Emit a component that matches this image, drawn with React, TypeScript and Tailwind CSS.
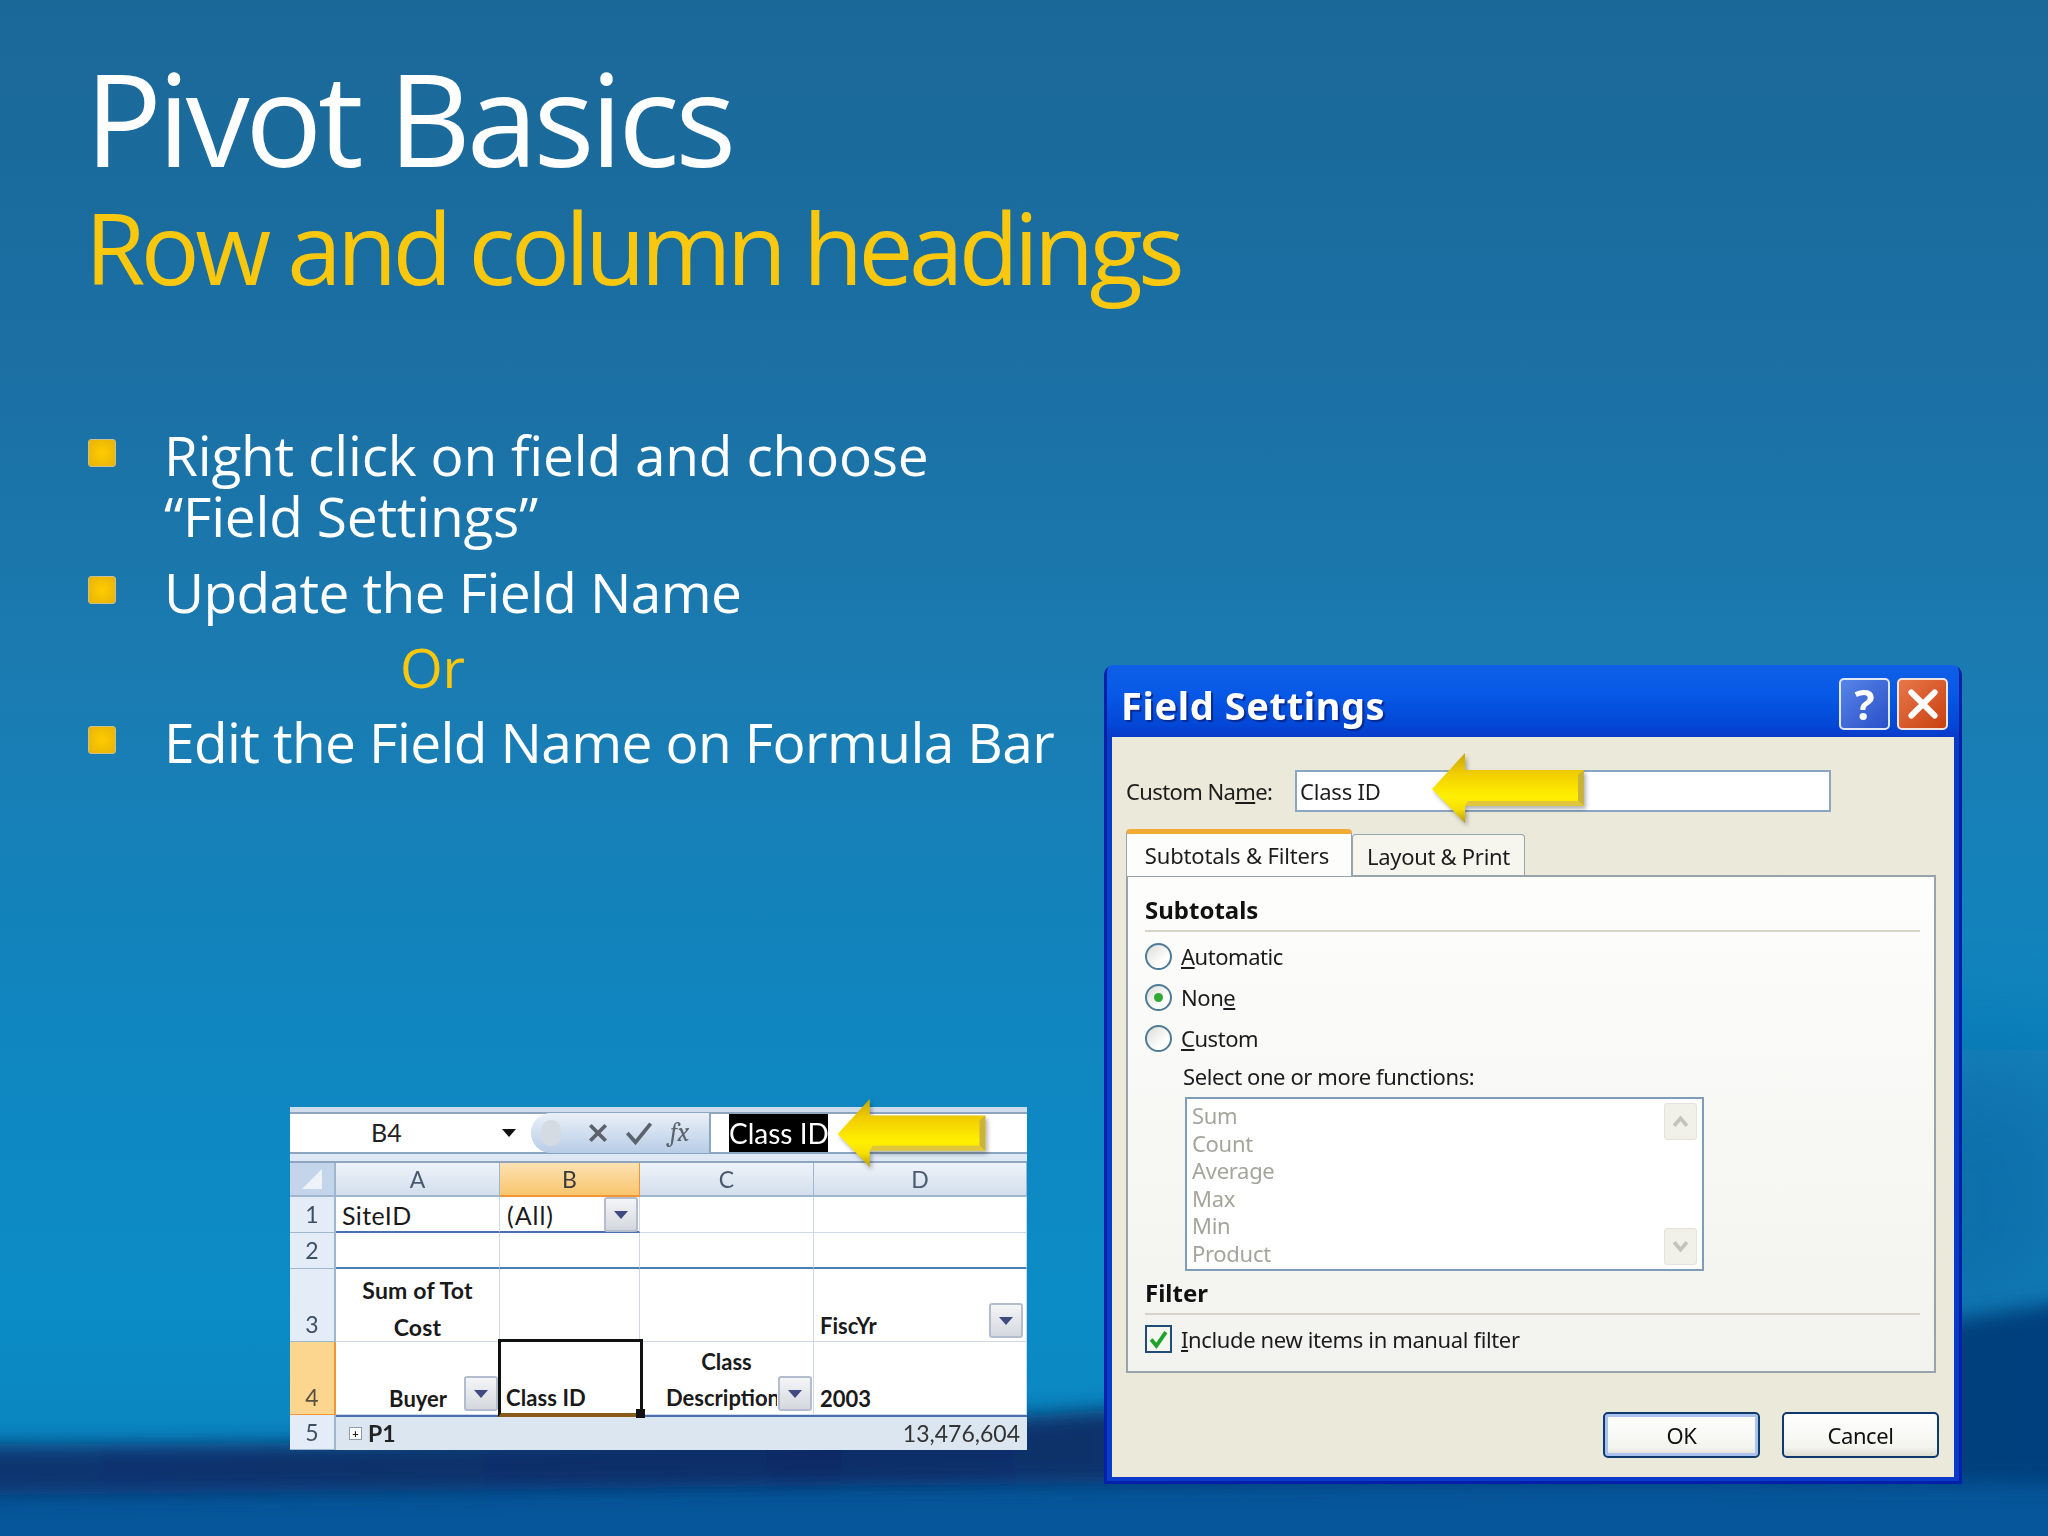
import React from 'react';

const dialogFont = { fontFamily: '"Noto Sans", "DejaVu Sans", sans-serif' };
const sheetFont = { fontFamily: 'Lato, "Liberation Sans", sans-serif' };

function YellowArrow({ id, className }: { id: string; className: string }) {
  return (
    <svg viewBox="0 0 152 70" className={className}>
      <defs>
        <linearGradient id={id} x1="0" y1="0" x2="0" y2="1">
          <stop offset="0" stopColor="#c9a400" />
          <stop offset="0.3" stopColor="#f2cf00" />
          <stop offset="0.62" stopColor="#fff000" />
          <stop offset="0.8" stopColor="#f7e000" />
          <stop offset="1" stopColor="#b99a08" />
        </linearGradient>
      </defs>
      <polygon points="0,36 33,0 33,17 152,17 152,53 33,53 33,70" fill={`url(#${id})`} />
      <polygon points="146,22 152,17 152,53 146,48" fill="#c9b33a" />
      <polygon points="33,53 152,53 146,48 36,48" fill="#e0c63a" />
    </svg>
  );
}

function Radio({ checked }: { checked?: boolean }) {
  return (
    <span className="flex h-[27px] w-[27px] items-center justify-center rounded-full border-2 border-[#4d7b98] bg-[linear-gradient(135deg,#dcdcd6,#ffffff_70%)]">
      {checked && <span className="h-[9px] w-[9px] rounded-full bg-[#2fa836]" />}
    </span>
  );
}

function RadioRow({ checked, children }: { checked?: boolean; children: React.ReactNode }) {
  return (
    <div className="flex h-[41px] items-center gap-[9px]">
      <Radio checked={checked} />
      <span className="text-[22px] tracking-[-0.45px] text-[#1c1c1c]">{children}</span>
    </div>
  );
}

function ScrollBtn({ up }: { up?: boolean }) {
  return (
    <div className="flex h-[37px] w-[33px] items-center justify-center rounded-[3px] border border-[#e4e4dc] bg-[#f1f1ea]">
      <svg viewBox="0 0 16 12" className="h-[13px] w-[17px]">
        <path d={up ? 'M2 10 L8 3 L14 10' : 'M2 2 L8 9 L14 2'} fill="none" stroke="#c4c4bc" strokeWidth="3.4" />
      </svg>
    </div>
  );
}

function XpButton({ label, primary }: { label: string; primary?: boolean }) {
  return (
    <div
      className={`flex h-[46px] w-[157px] items-center justify-center rounded-[5px] border-2 border-[#0f3a6e] bg-[linear-gradient(180deg,#ffffff,#f4f4ee_80%,#dcdcd0)] text-[22px] tracking-[-0.45px] text-[#111] ${
        primary ? 'shadow-[inset_0_0_0_3px_#a9c3ee]' : ''
      }`}
    >
      {label}
    </div>
  );
}

function FieldSettings() {
  return (
    <div
      style={dialogFont}
      className="flex h-[819px] w-[858px] flex-col rounded-t-[10px] px-[8px] pb-[7px] blur-[0.5px] shadow-[inset_-3px_-3px_0_#0420a8,inset_3px_-3px_0_#0420a8] bg-[linear-gradient(180deg,#0f5fe6_0,#0758e6_30px,#0347d6_60px,#0a3ac8_72px,#0a3ac8_100%)]"
    >
      <div className="flex h-[72px] shrink-0 items-center">
        <span className="ml-[9px] mt-[9px] text-[38px] font-bold tracking-[0.6px] text-white [text-shadow:2px_2px_1px_#0a2a90]">
          Field Settings
        </span>
        <div className="ml-auto mr-[6px] mt-[6px] flex gap-[7px]">
          <div className="flex h-[52px] w-[51px] items-center justify-center rounded-[5px] border-2 border-[#dfe8fb] bg-[linear-gradient(135deg,#5685e6,#2b50c9)] text-[42px] font-bold leading-none text-white">
            ?
          </div>
          <div className="flex h-[52px] w-[51px] items-center justify-center rounded-[5px] border-2 border-[#f0e5de] bg-[linear-gradient(135deg,#e9774a,#c8400f)]">
            <svg viewBox="0 0 32 32" className="h-[34px] w-[34px]">
              <path d="M5 5 L27 27 M27 5 L5 27" stroke="#fff" strokeWidth="5.5" strokeLinecap="round" />
            </svg>
          </div>
        </div>
      </div>

      <div className="flex flex-1 flex-col bg-[#ebe9d9] pl-[14px]">
        <div className="mt-[33px] flex h-[42px] items-center">
          <span className="w-[169px] text-[22px] tracking-[-0.6px] text-[#1c1c1c]">
            Custom Na<u className="underline-offset-2">m</u>e:
          </span>
          <div className="relative flex h-[42px] w-[536px] items-center border-2 border-[#8ba6c0] bg-white pl-[3px] text-[22px] tracking-[-0.2px] text-[#1c1c1c]">
            Class ID
            <YellowArrow
              id="dlgArrow"
              className="absolute left-[135px] top-[-19px] h-[70px] w-[152px] drop-shadow-[2px_3px_2px_rgba(0,0,0,0.3)]"
            />
          </div>
        </div>

        <div className="mt-[17px] flex h-[46px] items-end">
          <div className="z-10 -mb-[1px] flex h-[47px] w-[226px] items-center justify-center rounded-t-[4px] border-x border-[#98a4ab] border-t-[5px] border-t-[#f2ac35] bg-[#fdfdfb] pr-[4px] text-[22px] tracking-[-0.15px] text-[#1c1c1c]">
            Subtotals &amp; Filters
          </div>
          <div className="flex h-[41px] w-[173px] items-center justify-center rounded-t-[4px] border border-b-0 border-[#98a4ab] bg-[#f6f5ee] pt-[3px] text-[22px] tracking-[-0.3px] text-[#1c1c1c]">
            Layout &amp; Print
          </div>
        </div>

        <div className="flex h-[498px] w-[810px] flex-col border-2 border-[#98a4ab] bg-[linear-gradient(180deg,#fdfdfb,#f2f2ee)] pl-[17px] pr-[14px]">
          <div className="flex h-[53px] shrink-0 items-end pb-[2px] text-[24px] font-bold text-[#111]">Subtotals</div>
          <div className="h-[2px] shrink-0 bg-[#d6d4c6]" />
          <div className="mt-[4px]">
            <RadioRow>
              <u className="underline-offset-2">A</u>utomatic
            </RadioRow>
            <RadioRow checked>
              Non<u className="underline-offset-2">e</u>
            </RadioRow>
            <RadioRow>
              <u className="underline-offset-2">C</u>ustom
            </RadioRow>
          </div>
          <div className="ml-[38px] mt-[4px] flex h-[26px] items-center text-[22px] tracking-[-0.4px] text-[#1c1c1c]">
            Select one or more functions:
          </div>
          <div className="ml-[40px] mt-[8px] flex h-[174px] w-[519px] border-2 border-[#7f9db9] bg-white pl-[5px]">
            <div className="flex-1 pt-[3px] text-[22px] leading-[27.5px] tracking-[-0.3px] text-[#a5a59c]">
              <div>Sum</div>
              <div>Count</div>
              <div>Average</div>
              <div>Max</div>
              <div>Min</div>
              <div>Product</div>
            </div>
            <div className="mr-[5px] flex flex-col justify-between py-[4px]">
              <ScrollBtn up />
              <ScrollBtn />
            </div>
          </div>
          <div className="mt-[7px] flex h-[30px] items-center text-[24px] font-bold text-[#111]">Filter</div>
          <div className="mt-[5px] h-[2px] bg-[#d6d4c6]" />
          <div className="mt-[10px] flex h-[28px] items-center gap-[9px]">
            <span className="flex h-[28px] w-[27px] items-center justify-center border-2 border-[#1f4d78] bg-[#f6f6f0]">
              <svg viewBox="0 0 20 20" className="h-[21px] w-[21px]">
                <path d="M3 10 L8 16 L17 3" fill="none" stroke="#1fa32b" strokeWidth="3.6" />
              </svg>
            </span>
            <span className="text-[22px] tracking-[-0.37px] text-[#1c1c1c]">
              <u className="underline-offset-2">I</u>nclude new items in manual filter
            </span>
          </div>
        </div>

        <div className="mt-[39px] flex justify-end gap-[22px] pr-[15px]">
          <XpButton label="OK" primary />
          <XpButton label="Cancel" />
        </div>
      </div>
    </div>
  );
}

function FilterBtn({ className }: { className: string }) {
  return (
    <span
      className={`absolute flex h-[35px] w-[34px] items-center justify-center rounded-[3px] border-2 border-[#b4bdcd] bg-[linear-gradient(180deg,#f4f5f7,#d4d8de)] ${className}`}
    >
      <span className="h-0 w-0 border-x-[7px] border-t-[8px] border-x-transparent border-t-[#3f4a80]" />
    </span>
  );
}

const ColHead = ({ label, active }: { label: string; active?: boolean }) => (
  <div
    className={`flex items-center justify-center border-r border-b-2 text-[23px] ${
      active
        ? 'border-[#f29536] bg-[linear-gradient(180deg,#fce2b2,#f9c56e)] text-[#3b3b3b]'
        : 'border-[#9eb6ce] bg-[linear-gradient(180deg,#eef3f9,#d3dfed)] text-[#4a5a70]'
    }`}
  >
    {label}
  </div>
);

const RowNum = ({ n, active, tall }: { n: string; active?: boolean; tall?: boolean }) => (
  <div
    className={`flex justify-center border-r-2 border-b text-[23px] ${tall ? 'items-end' : 'items-center'} ${
      active ? 'border-[#f29536] bg-[#fcd58e] text-[#5a5040]' : 'border-[#9eb6ce] bg-[#e4ecf7] text-[#3f4f62]'
    }`}
  >
    {n}
  </div>
);

const cell = 'relative border-r border-b border-[#d0d7e5] bg-white text-[23px] text-[#1a1a1a]';

function PivotSheet() {
  return (
    <div style={sheetFont} className="w-[737px] bg-white blur-[0.5px]">
      <div className="h-[5px] bg-[#cfdcec]" />
      <div className="flex h-[42px] items-center border-y-2 border-[#8ea5bf] bg-white">
        <span className="ml-[81px] w-[131px] text-[25px] text-[#222]">B4</span>
        <span className="h-0 w-0 border-x-[7px] border-t-[8px] border-x-transparent border-t-[#111]" />
        <div className="ml-[15px] flex h-[40px] w-[180px] items-center rounded-l-[22px] border-r-2 border-[#8ea5bf] bg-[linear-gradient(180deg,#eaf0f8,#b8cde6)] pl-[10px]">
          <span className="h-[26px] w-[20px] rounded-full bg-[#d5dbe2]" />
          <svg viewBox="0 0 20 20" className="ml-[26px] h-[22px] w-[22px]">
            <path d="M3 3 L17 17 M17 3 L3 17" stroke="#5a626c" strokeWidth="3.4" />
          </svg>
          <svg viewBox="0 0 24 20" className="ml-[16px] h-[24px] w-[28px]">
            <path d="M2 10 L9 18 L22 2" fill="none" stroke="#5a626c" strokeWidth="3.2" />
          </svg>
          <span className="ml-[17px] font-serif text-[26px] italic text-[#5a626c]">fx</span>
        </div>
        <div className="relative ml-[18px] flex h-[38px] w-[99px] items-center bg-black text-[28px] text-white">
          <span className="whitespace-nowrap">Class ID</span>
          <YellowArrow
            id="barArrow"
            className="absolute left-[107px] top-[-15px] h-[68px] w-[151px] drop-shadow-[2px_3px_2px_rgba(0,0,0,0.3)]"
          />
        </div>
      </div>
      <div className="h-[9px] border-b-2 border-[#8ea5bf] bg-[#dde8f4]" />

      <div className="grid grid-cols-[46px_164px_140px_174px_213px] grid-rows-[34px_36px_36px_73px_73px_35px]">
        <div className="flex items-center justify-center border-r-2 border-b-2 border-[#9eb6ce] bg-[#c4d5eb]">
          <span className="h-0 w-0 border-b-[20px] border-l-[20px] border-b-[#eef3f9] border-l-transparent" />
        </div>
        <ColHead label="A" />
        <ColHead label="B" active />
        <ColHead label="C" />
        <ColHead label="D" />

        <RowNum n="1" />
        <div className={`${cell} flex items-center !border-b-2 !border-b-[#4a6fae] pl-[6px] pt-[3px] !text-[25px] tracking-[0.4px]`}>SiteID</div>
        <div className={`${cell} flex items-center !border-b-2 !border-b-[#4a6fae] pl-[7px] pt-[3px] !text-[25px] tracking-[1px]`}>
          (All)
          <FilterBtn className="right-[1px] top-[0px]" />
        </div>
        <div className={cell} />
        <div className={cell} />

        <RowNum n="2" />
        <div className={`${cell} !border-b-2 !border-b-[#4a80b0]`} />
        <div className={`${cell} !border-b-2 !border-b-[#4a80b0]`} />
        <div className={`${cell} !border-b-2 !border-b-[#4a80b0]`} />
        <div className={`${cell} !border-b-2 !border-b-[#4a80b0]`} />

        <RowNum n="3" tall />
        <div className={`${cell} flex flex-col items-center pt-[3px] !text-[23px] font-bold leading-[37px] tracking-[0.2px]`}>
          <span>Sum of Tot</span>
          <span>Cost</span>
        </div>
        <div className={cell} />
        <div className={cell} />
        <div className={`${cell} flex items-end pl-[6px] !text-[22px] font-bold leading-[30px]`}>
          FiscYr
          <FilterBtn className="right-[3px] top-[34px]" />
        </div>

        <RowNum n="4" active tall />
        <div className={`${cell} flex items-end justify-end pr-[52px] !text-[22px] font-bold leading-[30px]`}>
          Buyer
          <FilterBtn className="right-[1px] top-[34px]" />
        </div>
        <div className="relative z-10 -mb-[2px] -ml-[2px] -mr-[3px] -mt-[3px] flex items-end border-[3px] border-b-[4px] border-[#111] border-b-[#8a5a1a] bg-white pl-[5px] text-[22px] font-bold leading-[30px] tracking-[0.1px] text-[#1a1a1a]">
          Class ID
          <span className="absolute -bottom-[5px] -right-[5px] h-[9px] w-[9px] bg-[#111]" />
        </div>
        <div className={`${cell} flex flex-col overflow-hidden pt-[2px] !text-[22px] font-bold leading-[36px]`}>
          <span className="text-center">Class</span>
          <span className="w-[137px] overflow-hidden whitespace-nowrap pl-[26px]">Description</span>
          <FilterBtn className="right-[1px] top-[34px]" />
        </div>
        <div className={`${cell} flex items-end pl-[6px] !text-[22px] font-bold leading-[30px]`}>2003</div>

        <RowNum n="5" />
        <div className="col-span-4 flex items-center justify-between border-t-2 border-[#4a6fae] bg-[#dce6f1] pl-[13px] pr-[7px] text-[23px] text-[#222]">
          <span className="flex items-center gap-[6px] font-bold">
            <span className="flex h-[13px] w-[13px] items-center justify-center border border-[#8b9bb0] bg-white text-[11px] leading-none">
              +
            </span>
            P1
          </span>
          <span className="text-[#333]">13,476,604</span>
        </div>
      </div>
    </div>
  );
}

function Bullet({ children, mt }: { children: React.ReactNode; mt: string }) {
  return (
    <li className={`flex items-start ${mt}`}>
      <span className="mt-[15px] h-[28px] w-[28px] shrink-0 rounded-[3px] border border-[#c8c090] bg-[radial-gradient(circle,#ffcc00,#e8b208)]" />
      <span className="ml-[48px]">{children}</span>
    </li>
  );
}

export default function App() {
  return (
    <div className="relative h-[1536px] w-[2048px] overflow-hidden bg-[linear-gradient(180deg,#1a6898_0%,#1b70a4_25%,#1a7cb2_45%,#0f86c0_68%,#0b8cc6_85%,#0a86c0_93%)]">
      <svg viewBox="0 0 2048 1536" preserveAspectRatio="none" className="absolute inset-0 h-full w-full">
        <defs>
          <filter id="soft" x="-10%" y="-30%" width="120%" height="160%">
            <feGaussianBlur stdDeviation="10" />
          </filter>
          <filter id="softer" filterUnits="userSpaceOnUse" x="1000" y="500" width="1400" height="1300">
            <feGaussianBlur stdDeviation="60" />
          </filter>
          <linearGradient id="wave" x1="0" y1="0" x2="1" y2="0">
            <stop offset="0" stopColor="#0a3570" />
            <stop offset="0.4" stopColor="#082c66" />
            <stop offset="1" stopColor="#03427f" />
          </linearGradient>
        </defs>
        <path d="M1750 1050 L2100 1050 L2100 1330 L1500 1420 Z" fill="#0870aa" filter="url(#softer)" />
        <rect x="-40" y="1465" width="2130" height="100" fill="#05569a" />
        <path
          d="M-40 1444 C400 1446 800 1432 1100 1410 C1500 1380 1850 1340 2090 1296 L2090 1485 C1500 1475 700 1488 -40 1495 Z"
          fill="url(#wave)"
          filter="url(#soft)"
        />
      </svg>

      <div className="relative pl-[88px] pt-[45px] text-white" style={{ fontFamily: '"Open Sans", "Noto Sans", sans-serif' }}>
        <h1 className="-ml-[3px] -mt-[2px] text-[128px] font-normal leading-[150px] tracking-[-4.3px]">Pivot Basics</h1>
        <h2 className="-ml-[3px] -mt-[8px] text-[98px] font-normal leading-[125px] tracking-[-4.65px] text-[#f9c80e]">
          Row and column headings
        </h2>

        <div className="mt-[114px] flex">
          <div className="w-[1016px] shrink-0">
            <ul className="text-[55px] font-normal leading-[61px] tracking-[-0.2px]">
              <Bullet mt="">
                Right click on field and choose
                <br />
                “Field Settings”
              </Bullet>
              <Bullet mt="mt-[15px]">
                <span className="tracking-[-0.6px]">Update the Field Name</span>
              </Bullet>
              <li className="mt-[14px] pl-[312px] text-[#f9c80e]">Or</li>
              <Bullet mt="mt-[14px]">
                <span className="tracking-[-0.6px]">Edit the Field Name on Formula Bar</span>
              </Bullet>
            </ul>
            <div className="ml-[202px] mt-[335px]">
              <PivotSheet />
            </div>
          </div>
          <div className="mt-[241px]">
            <FieldSettings />
          </div>
        </div>
      </div>
    </div>
  );
}
